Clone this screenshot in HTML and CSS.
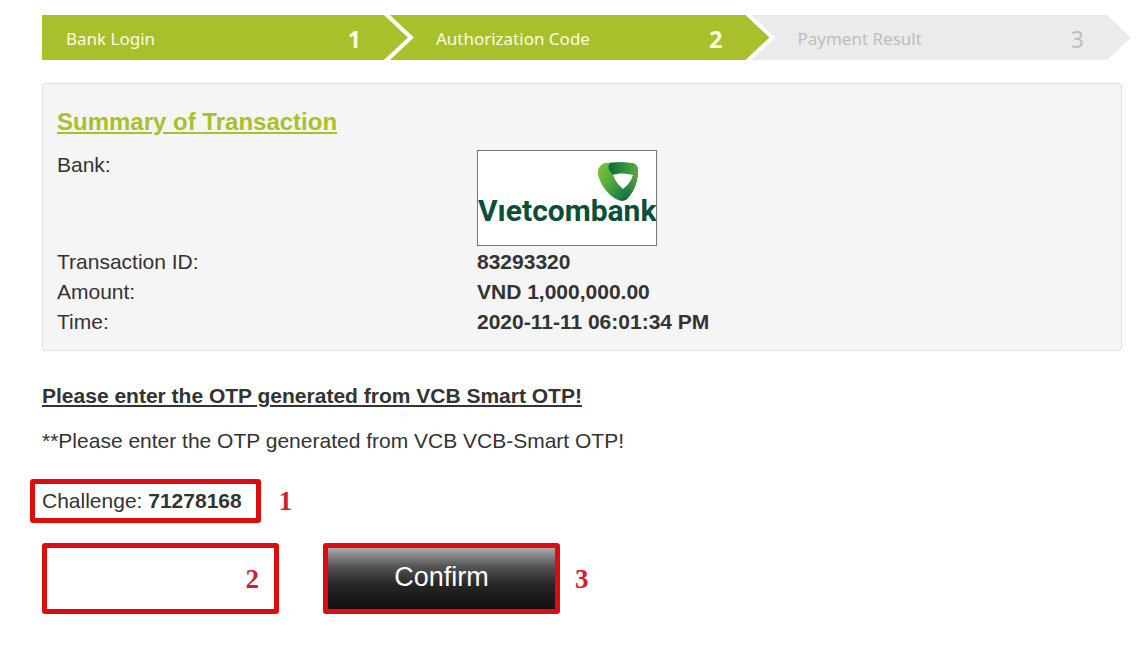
FILE: index.html
```
<!DOCTYPE html>
<html lang="en">
<head>
  <meta charset="UTF-8">
  <meta name="viewport" content="width=device-width, initial-scale=1">
  <title>Authorization Code</title>
  <link rel="stylesheet" href="styles.css">
</head>
<body>
<div class="page">
  <ol class="steps">
    <li class="step"><span>Bank Login</span><b class="step-number">1</b></li>
    <li class="step"><span>Authorization Code</span><b class="step-number">2</b></li>
    <li class="step step-pending"><span>Payment Result</span><span class="step-number">3</span></li>
  </ol>

  <main class="content">
    <section class="summary">
      <h1 class="summary-title">Summary of Transaction</h1>
      <dl class="summary-list">
        <dt>Bank:</dt>
        <dd>
          <svg class="bank-logo" viewBox="0 0 178 94" role="img" aria-label="Vietcombank">
            <defs>
              <linearGradient id="leaf-left" x1="0" y1="0.2" x2="1" y2="0.8">
                <stop offset="0" stop-color="#7cc142"/>
                <stop offset="0.4" stop-color="#4fa53c"/>
                <stop offset="0.8" stop-color="#0f7a45"/>
              </linearGradient>
              <linearGradient id="leaf-top" x1="0" y1="0" x2="1" y2="0">
                <stop offset="0" stop-color="#0b6a3a"/>
                <stop offset="0.5" stop-color="#2d8f3d"/>
                <stop offset="1" stop-color="#5cab3e"/>
              </linearGradient>
              <linearGradient id="leaf-right" x1="0.8" y1="0" x2="0.2" y2="1">
                <stop offset="0" stop-color="#5cab3e"/>
                <stop offset="1" stop-color="#0b6a3f"/>
              </linearGradient>
            </defs>
            <path fill="url(#leaf-left)" d="M128 12C122 13 119 18 120 24C123 35 131 45 140 49C143 50 146 50 149 48C156 41 160 30 160 20C160 15 157 12 153 12C145 11 136 11 128 12Z"/>
            <path fill="url(#leaf-right)" d="M154 23L160 20C160 30 156 41 149 48C147 50 144 50 142 49C146 46 148 42 145 37Z"/>
            <path fill="url(#leaf-top)" d="M135 24C131 20 129 16 132 12C139 11 146 11 153 12C158 12 161 16 160 21C159 25 157 25 154 24C148 22 141 22 135 24Z"/>
            <path fill="#fff" d="M135 24C141 22 148 22 155 24C153 30 150 34 145 38C140 34 137 29 135 24Z"/>
            <text class="bank-logo-text" x="0" y="70">Vıetcombank</text>
          </svg>
        </dd>
        <dt>Transaction ID:</dt>
        <dd>83293320</dd>
        <dt>Amount:</dt>
        <dd>VND 1,000,000.00</dd>
        <dt>Time:</dt>
        <dd>2020-11-11 06:01:34 PM</dd>
      </dl>
    </section>

    <h2 class="otp-title">Please enter the OTP generated from VCB Smart OTP!</h2>
    <p class="otp-note">**Please enter the OTP generated from VCB VCB-Smart OTP!</p>

    <form class="otp-form">
      <div class="challenge-row">
        <p class="challenge">Challenge: <b>71278168</b></p>
        <span class="marker">1</span>
      </div>
      <div class="form-row">
        <div class="otp-field">
          <input type="text" class="otp-input" aria-label="OTP" autocomplete="off">
          <span class="marker marker-inside">2</span>
        </div>
        <button type="submit" class="confirm-btn">Confirm</button>
        <span class="marker">3</span>
      </div>
    </form>
  </main>
</div>
</body>
</html>
```
FILE: styles.css
```
* {
  box-sizing: border-box;
}

body {
  margin: 0;
  background: #fff;
  color: #333;
  font: 21px/30px "Liberation Sans", Arial, sans-serif;
}

.page {
  padding: 15px 15px 30px 42px;
}

/* Progress steps */
.steps {
  display: flex;
  margin: 0;
  padding: 0;
  list-style: none;
  font: 17px/24px "Noto Sans", "Open Sans", sans-serif;
}

.step {
  display: flex;
  flex: 1;
  align-items: center;
  justify-content: space-between;
  height: 45px;
  margin-left: -18px;
  padding: 2px 47px 0 46px;
  background: #a9c02c;
  color: #fbffe0;
  white-space: nowrap;
  clip-path: polygon(0 0, calc(100% - 24px) 0, 100% 50%, calc(100% - 24px) 100%, 0 100%, 24px 50%);
}

.step:first-child {
  flex: 0 0 33.6%;
  margin-left: 0;
  padding-left: 24px;
  clip-path: polygon(0 0, calc(100% - 24px) 0, 100% 50%, calc(100% - 24px) 100%, 0 100%);
}

.step-pending {
  background: #ebebeb;
  color: #bdbdbd;
}

.step-number {
  font-size: 23px;
}

/* Transaction summary */
.content {
  margin-right: 9px;
}

.summary {
  margin-top: 23px;
  padding: 23px 14px 13px;
  border: 1px solid #e0e0e0;
  border-radius: 4px;
  background: #f5f5f5;
}

.summary-title {
  margin: 0 0 13px;
  color: #a9c02c;
  font-size: 24px;
  line-height: 30px;
  text-decoration: underline;
}

.summary-list {
  display: grid;
  grid-template-columns: 2fr 3fr;
  margin: 0;
}

.summary-list dd {
  margin: 0;
  font-weight: bold;
}

.bank-logo {
  display: block;
  width: 180px;
  height: 96px;
  margin-bottom: 1px;
  border: 1px solid #777;
  background: #fff;
}

.bank-logo-text {
  fill: #0b4f36;
  font: bold 30px Roboto, sans-serif;
}

/* OTP form */
.otp-title {
  margin: 30px 0 15px;
  font-size: 21px;
  line-height: 30px;
  text-decoration: underline;
}

.otp-note {
  margin: 0 0 23px;
}

.challenge-row,
.form-row {
  display: flex;
  align-items: center;
}

.challenge-row {
  gap: 18px;
  margin-left: -12px;
}

.challenge {
  margin: 0;
  padding: 2px 14px 2px 7px;
  border: 5px solid #dc0c10;
  border-radius: 3px;
}

.form-row {
  margin-top: 20px;
}

.otp-field {
  position: relative;
  margin-right: 44px;
}

.otp-input,
.confirm-btn {
  display: block;
  width: 237px;
  height: 71px;
  border: 5px solid #dc0c10;
  border-radius: 3px;
  font: 27px/30px "Liberation Sans", Arial, sans-serif;
}

.otp-input {
  padding: 0 40px 0 10px;
  background: #fff;
  color: #333;
}

.confirm-btn {
  margin-right: 15px;
  padding: 0 0 4px;
  background: linear-gradient(#aaa, #555 30%, #262626 60%, #111) padding-box;
  color: #fff;
  cursor: pointer;
}

.marker {
  color: #cf2030;
  font: bold 27px/30px "Liberation Serif", "Times New Roman", serif;
}

.marker-inside {
  position: absolute;
  top: 21px;
  right: 20px;
}
```
